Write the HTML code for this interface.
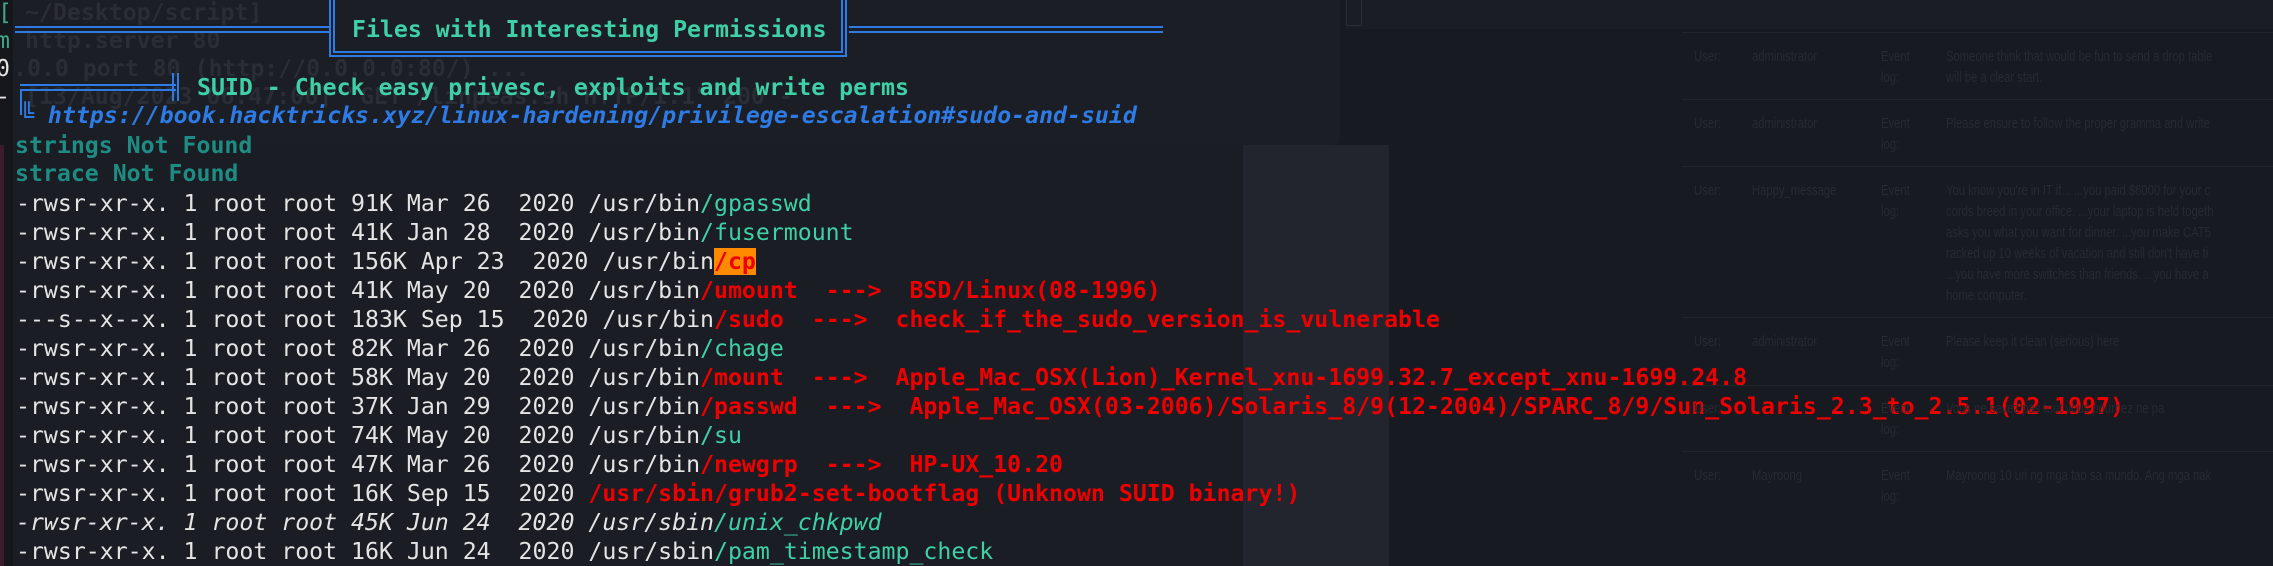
<!DOCTYPE html>
<html><head><meta charset="utf-8"><style>
html,body{margin:0;padding:0;width:2273px;height:566px;overflow:hidden;background:#171a21}
.l{position:absolute;font-family:"DejaVu Sans Mono","Liberation Mono",monospace;font-size:23.2px;line-height:29px;white-space:pre;color:#e4e4e4}
.g{color:#3fd0a6;font-weight:bold}.r{color:#ee0000;font-weight:bold}.b{color:#2e7be6;font-weight:bold;font-style:italic}.d{color:#1f8c84;font-weight:bold}
.f{color:#2a2d33;font-weight:bold}
.dl{position:absolute;border-top:2px solid #2e7be6;border-bottom:2px solid #2e7be6;height:3px}
.rt{position:absolute;font-family:"Liberation Sans",sans-serif;font-size:15px;color:#262a31;line-height:21px;white-space:pre;transform:scaleX(0.75);transform-origin:0 0}
.hl{position:absolute;left:1682px;width:600px;height:1px;background:#22252c}
</style></head><body>
<div style="position:absolute;left:0;top:0;width:1243px;height:566px;background:#1a1d23"></div>
<div style="position:absolute;left:0;top:0;width:1340px;height:145px;background:#1b1e25;border-bottom-right-radius:6px"></div>
<div style="position:absolute;left:1243px;top:145px;width:146px;height:421px;background:#22252d"></div>
<div style="position:absolute;left:1345px;top:0;width:928px;height:29px;background:#1a1d24"></div>
<div style="position:absolute;left:1346px;top:0;width:14px;height:25px;border:1px solid #2a2d35;border-top:none"></div>
<div style="position:absolute;left:0;top:0;width:13px;height:566px;background:#15171c"></div>
<div style="position:absolute;left:0;top:145px;width:4px;height:421px;background:#3a1c2c"></div>

<div class="l f" style="left:25px;top:-2px">~/Desktop/script]</div>
<div class="l f" style="left:25px;top:26px">http.server 80</div>
<div class="l f" style="left:13px;top:54px">.0.0 port 80 (http://0.0.0.0:80/) ...</div>
<div class="l f" style="left:25px;top:82px">[13/Aug/2023 06:47:06] "GET /linpeas.sh HTTP/1.1" 200 -</div>
<div class="l" style="left:-2px;top:-2px;color:#3fa88a">[</div>
<div class="l" style="left:-4px;top:26px;color:#3fa88a">m</div>
<div class="l" style="left:-4px;top:54px">0</div>
<div class="l" style="left:-4px;top:82px">-</div>

<div class="dl" style="left:15px;top:26px;width:314px"></div>
<div class="dl" style="left:849px;top:26px;width:314px"></div>
<div style="position:absolute;left:329px;top:0;width:514px;height:55px;border:2px solid #2e7be6;border-top:none"></div>
<div style="position:absolute;left:333px;top:0;width:506px;height:51px;border:2px solid #2e7be6;border-top:none"></div>
<div class="l g" style="left:352px;top:15px">Files with Interesting Permissions</div>

<div class="dl" style="left:20px;top:84px;width:156px"></div>
<div style="position:absolute;left:20px;top:89px;width:3px;height:26px;border-left:2px solid #2e7be6"></div>
<div style="position:absolute;left:172px;top:73px;width:3px;height:28px;border-left:2px solid #2e7be6;border-right:2px solid #2e7be6"></div>
<div class="l g" style="left:197px;top:73px">SUID - Check easy privesc, exploits and write perms</div>
<div class="l b" style="left:20px;top:101px"><span style="font-style:normal">╚</span> https://book.hacktricks.xyz/linux-hardening/privilege-escalation#sudo-and-suid</div>
<div class="l d" style="left:15px;top:131px">strings Not Found</div>
<div class="l d" style="left:15px;top:159px">strace Not Found</div>

<div class="l" style="left:16px;top:189px">-rwsr-xr-x. 1 root root 91K Mar 26  2020 /usr/bin<span class="g" style="font-weight:normal">/gpasswd</span></div>
<div class="l" style="left:16px;top:218px">-rwsr-xr-x. 1 root root 41K Jan 28  2020 /usr/bin<span class="g" style="font-weight:normal">/fusermount</span></div>
<div class="l" style="left:16px;top:247px">-rwsr-xr-x. 1 root root 156K Apr 23  2020 /usr/bin<span class="r" style="background:#ff8a00">/cp</span></div>
<div class="l" style="left:16px;top:276px">-rwsr-xr-x. 1 root root 41K May 20  2020 /usr/bin<span class="r">/umount  ---&gt;  BSD/Linux(08-1996)</span></div>
<div class="l" style="left:16px;top:305px">---s--x--x. 1 root root 183K Sep 15  2020 /usr/bin<span class="r">/sudo  ---&gt;  check_if_the_sudo_version_is_vulnerable</span></div>
<div class="l" style="left:16px;top:334px">-rwsr-xr-x. 1 root root 82K Mar 26  2020 /usr/bin<span class="g" style="font-weight:normal">/chage</span></div>
<div class="l" style="left:16px;top:363px">-rwsr-xr-x. 1 root root 58K May 20  2020 /usr/bin<span class="r">/mount  ---&gt;  Apple_Mac_OSX(Lion)_Kernel_xnu-1699.32.7_except_xnu-1699.24.8</span></div>
<div class="l" style="left:16px;top:392px">-rwsr-xr-x. 1 root root 37K Jan 29  2020 /usr/bin<span class="r">/passwd  ---&gt;  Apple_Mac_OSX(03-2006)/Solaris_8/9(12-2004)/SPARC_8/9/Sun_Solaris_2.3_to_2.5.1(02-1997)</span></div>
<div class="l" style="left:16px;top:421px">-rwsr-xr-x. 1 root root 74K May 20  2020 /usr/bin<span class="g" style="font-weight:normal">/su</span></div>
<div class="l" style="left:16px;top:450px">-rwsr-xr-x. 1 root root 47K Mar 26  2020 /usr/bin<span class="r">/newgrp  ---&gt;  HP-UX_10.20</span></div>
<div class="l" style="left:16px;top:479px">-rwsr-xr-x. 1 root root 16K Sep 15  2020 <span class="r">/usr/sbin/grub2-set-bootflag (Unknown SUID binary!)</span></div>
<div class="l" style="left:16px;top:508px;font-style:italic">-rwsr-xr-x. 1 root root 45K Jun 24  2020 /usr/sbin<span class="g" style="font-weight:normal">/unix_chkpwd</span></div>
<div class="l" style="left:16px;top:537px">-rwsr-xr-x. 1 root root 16K Jun 24  2020 /usr/sbin<span class="g" style="font-weight:normal">/pam_timestamp_check</span></div>

<div class="hl" style="top:32px"></div>
<div class="hl" style="top:99px"></div>
<div class="hl" style="top:166px"></div>
<div class="hl" style="top:317px"></div>
<div class="hl" style="top:385px"></div>
<div class="hl" style="top:451px"></div>
<div class="rt" style="left:1694px;top:46px">User:</div><div class="rt" style="left:1752px;top:46px">administrator</div><div class="rt" style="left:1881px;top:46px">Event
log:</div><div class="rt" style="left:1946px;top:46px">Someone think that would be fun to send a drop table
will be a clear start.</div>
<div class="rt" style="left:1694px;top:113px">User:</div><div class="rt" style="left:1752px;top:113px">administrator</div><div class="rt" style="left:1881px;top:113px">Event
log:</div><div class="rt" style="left:1946px;top:113px">Please ensure to follow the proper gramma and write</div>
<div class="rt" style="left:1694px;top:180px">User:</div><div class="rt" style="left:1752px;top:180px">Happy_message</div><div class="rt" style="left:1881px;top:180px">Event
log:</div><div class="rt" style="left:1946px;top:180px">You know you're in IT if... ...you paid $6000 for your c
cords breed in your office. ...your laptop is held togeth
asks you what you want for dinner. ...you make CAT5
racked up 10 weeks of vacation and still don't have ti
...you have more switches than friends. ...you have a
home computer.</div>
<div class="rt" style="left:1694px;top:331px">User:</div><div class="rt" style="left:1752px;top:331px">administrator</div><div class="rt" style="left:1881px;top:331px">Event
log:</div><div class="rt" style="left:1946px;top:331px">Please keep it clean (serious) here</div>
<div class="rt" style="left:1694px;top:398px">User:</div><div class="rt" style="left:1881px;top:398px">Event
log:</div><div class="rt" style="left:1946px;top:398px">Vous ne savez pas tout vous pourriez ne pa</div>
<div class="rt" style="left:1694px;top:465px">User:</div><div class="rt" style="left:1752px;top:465px">Mayroong</div><div class="rt" style="left:1881px;top:465px">Event
log:</div><div class="rt" style="left:1946px;top:465px">Mayroong 10 uri ng mga tao sa mundo. Ang mga nak</div>
</body></html>
